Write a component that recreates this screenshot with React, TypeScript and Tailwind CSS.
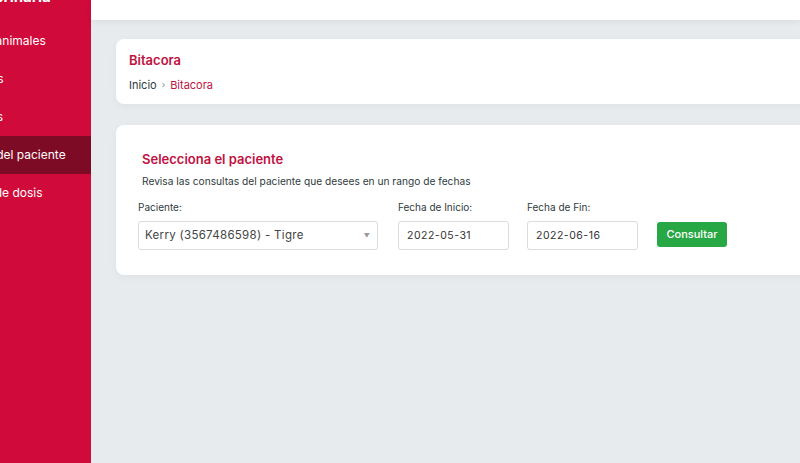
import React from 'react';

const MENU = [
    { label: 'Tipos de animales', active: false, offset: '-ml-[57px]' },
    { label: 'Consultas', active: false, offset: '-ml-[53px]' },
    { label: 'Mascotas', active: false, offset: '-ml-[52px]' },
    { label: 'Bitacora del paciente', active: true, offset: '-ml-[54px]' },
    { label: 'Control de dosis', active: false, offset: '-ml-[50px]' },
];

function Sidebar() {
    return (
        <aside className="w-[91px] shrink-0 bg-[#d00a3a] overflow-hidden">
            <div className="h-[22px] flex whitespace-nowrap">
                <div className="-ml-[30px] -mt-[13px] text-[15px] font-bold text-white leading-[20px]">
                    Veterinaria
                </div>
            </div>
            <nav className="flex flex-col">
                {MENU.map(item => (
                    <div
                        key={item.label}
                        className={
                            item.active
                                ? 'h-[38px] flex items-center bg-[#7e0b25] text-white'
                                : 'h-[38px] flex items-center text-white'
                        }
                    >
                        <span className={`${item.offset} whitespace-nowrap text-[12px]`}>{item.label}</span>
                    </div>
                ))}
            </nav>
        </aside>
    );
}

function Field({ label, children }: { label: string; children: React.ReactNode }) {
    return (
        <div className="flex flex-col">
            <label className="text-[10px] text-[#2f3a40] h-[12px] leading-[12px] mb-[8px]">{label}</label>
            {children}
        </div>
    );
}

export default function App() {
    return (
        <div
            className="flex h-[463px] w-[800px] overflow-hidden bg-[#e8ebee]"
            style={{ fontFamily: 'Inter, "Noto Sans", sans-serif' }}
        >
            <Sidebar />
            <div className="flex-1 min-w-0 flex flex-col">
                <header className="h-[20px] shrink-0 bg-white shadow-[0_2px_6px_rgba(0,0,0,0.06)]" />
                <main className="pl-[25px] pt-[19px] flex flex-col gap-[21px]">
                    {/* Title card */}
                    <section className="w-[720px] h-[65px] bg-white rounded-lg shadow-[0_2px_8px_rgba(0,0,0,0.04)] pl-[13px] pt-[12px]">
                        <h1 className="text-[13px] font-semibold text-[#c0123f] leading-[18px]">Bitacora</h1>
                        <div className="mt-[9px] flex items-center gap-[5px] text-[11px] leading-[14px]">
                            <span className="text-[#2f3a40]">Inicio</span>
                            <span className="text-[#888] text-[9px]">›</span>
                            <span className="text-[#c0123f]">Bitacora</span>
                        </div>
                    </section>

                    {/* Form card */}
                    <section className="w-[720px] h-[150px] bg-white rounded-lg shadow-[0_2px_8px_rgba(0,0,0,0.04)] pl-[22px] pt-[25px]">
                        <h2 className="pl-[4px] text-[13px] font-semibold text-[#c0123f] leading-[18px]">
                            Selecciona el paciente
                        </h2>
                        <p className="pl-[4px] mt-[6px] text-[10.2px] text-[#2f3a40] leading-[14px]">
                            Revisa las consultas del paciente que desees en un rango de fechas
                        </p>
                        <div className="mt-[13px] flex items-end">
                            <Field label="Paciente:">
                                <div className="w-[240px] h-[29px] border border-[#dcdcdc] rounded-[3px] flex items-center justify-between pl-[6px] pr-[7px] text-[11.5px] text-[#444] tracking-[0.3px]">
                                    <span>Kerry (3567486598) - Tigre</span>
                                    <span className="text-[6px] text-[#999]">▼</span>
                                </div>
                            </Field>
                            <div className="ml-[20px]">
                                <Field label="Fecha de Inicio:">
                                    <div className="w-[111px] h-[29px] border border-[#dcdcdc] rounded-[3px] flex items-center px-[8px] text-[10.5px] text-[#333] tracking-[0.5px]">
                                        2022-05-31
                                    </div>
                                </Field>
                            </div>
                            <div className="ml-[18px]">
                                <Field label="Fecha de Fin:">
                                    <div className="w-[111px] h-[29px] border border-[#dcdcdc] rounded-[3px] flex items-center px-[8px] text-[10.5px] text-[#333] tracking-[0.5px]">
                                        2022-06-16
                                    </div>
                                </Field>
                            </div>
                            <button className="ml-[19px] mb-[3px] w-[70px] h-[25px] rounded-[3px] bg-[#28a745] text-white text-[11px] font-medium">
                                Consultar
                            </button>
                        </div>
                    </section>
                </main>
            </div>
        </div>
    );
}
